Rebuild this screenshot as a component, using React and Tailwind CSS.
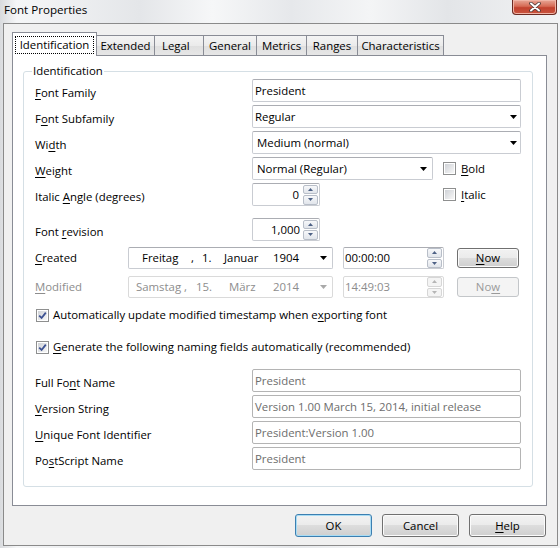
import React from "react";

const U = ({ children }) => (
  <span className="underline decoration-1 underline-offset-[2px]">{children}</span>
);

function DownArrow({ disabled }) {
  return (
    <svg width="7" height="4" viewBox="0 0 7 4" className="shrink-0">
      <polygon points="0,0 7,0 3.5,4" fill={disabled ? "#a9a9a9" : "#000"} />
    </svg>
  );
}

function SpinButtons({ disabled }) {
  const arrow = disabled ? "#b5b5b5" : "#4d6185";
  const half = disabled
    ? "flex-1 flex items-center justify-center border border-[#d6d6d6] rounded-[2px] bg-[#f4f4f4]"
    : "flex-1 flex items-center justify-center border border-[#b8bec8] rounded-[2px] bg-[linear-gradient(#f7f8fa,#e1e5eb)]";
  return (
    <div className="flex flex-col w-[15px] h-[20px] gap-[1px] shrink-0">
      <div className={half}>
        <svg width="5" height="3" viewBox="0 0 5 3">
          <polygon points="0,3 5,3 2.5,0" fill={arrow} />
        </svg>
      </div>
      <div className={half}>
        <svg width="5" height="3" viewBox="0 0 5 3">
          <polygon points="0,0 5,0 2.5,3" fill={arrow} />
        </svg>
      </div>
    </div>
  );
}

function CheckBox({ checked }) {
  return (
    <div className="w-[13px] h-[13px] border border-[#8e8f8f] bg-white p-[1px] shrink-0">
      <div className="w-full h-full bg-[linear-gradient(135deg,#cfd2d7,#f7f7f7)] flex items-center justify-center">
        {checked && (
          <svg width="9" height="9" viewBox="0 0 9 9">
            <path d="M1.2 4.6 L3.6 7 L7.8 1.6" fill="none" stroke="#3c5192" strokeWidth="1.8" />
          </svg>
        )}
      </div>
    </div>
  );
}

const fieldBox = "border border-[#c9ccd2] border-t-[#abadb3] rounded-[2px] bg-white";
const greyBox = "border border-[#b4b4b4] rounded-[2px] bg-white";
const btnNormal =
  "flex items-center justify-center rounded-[3px] border border-[#707070] bg-[linear-gradient(#f2f2f2_0%,#ebebeb_50%,#dddddd_50%,#cfcfcf_100%)] shadow-[inset_0_0_0_1px_#fbfbfb]";

function Label({ children, grey }) {
  return (
    <div className={`w-[217px] shrink-0 pt-[6px] leading-[16px] ${grey ? "text-[#8d8d8d]" : ""}`}>{children}</div>
  );
}

export default function App() {
  const tabs = [
    { t: "Extended", w: "w-[59px]", a: "justify-center" },
    { t: "Legal", w: "w-[50px]", a: "justify-start pl-[7px]" },
    { t: "General", w: "w-[54px]", a: "justify-center" },
    { t: "Metrics", w: "w-[51px]", a: "justify-center" },
    { t: "Ranges", w: "w-[52px]", a: "justify-center" },
    { t: "Characteristics", w: "w-[87px]", a: "justify-center" },
  ];

  return (
    <div className="w-[560px] h-[548px] overflow-hidden bg-[linear-gradient(90deg,#d9dbde,#f5f6f7_3%,#e4e6e9_25%,#f6f7f8_38%,#e6e8eb_52%,#f4f5f6_66%,#e3e5e8_80%,#f2f3f4)] font-['Open_Sans',sans-serif] text-[11.4px] text-black">
      {/* Title bar */}
      <div className="h-[23px] flex items-start justify-between">
        <div className="pl-[4px] pt-[2px] leading-[16px] text-[11.6px]">Font Properties</div>
        <div className="mr-[3px] w-[45px] h-[15px] rounded-b-[4px] border border-t-0 border-[#6b2a22] bg-[linear-gradient(#e8a696,#d66a55_45%,#c2412e_55%,#c9553f)] flex items-center justify-center shadow-[inset_0_0_0_1px_#f0b4a6]">
          <svg width="12" height="10" viewBox="0 0 12 10">
            <path d="M2 1.5 L10 8.5 M10 1.5 L2 8.5" stroke="#4a3a38" strokeWidth="3.6" strokeLinecap="round" />
            <path d="M2 1.5 L10 8.5 M10 1.5 L2 8.5" stroke="#ffffff" strokeWidth="2" strokeLinecap="round" />
          </svg>
        </div>
      </div>

      {/* Client area */}
      <div className="ml-[3px] w-[555px] h-[523px] border border-[#8a8a8a] bg-[#f0f0f0] flex flex-col">
        {/* Tabs */}
        <div className="pt-[8px] pl-[8px] flex items-end">
          <div className="relative z-10 w-[85px] h-[24px] -mb-px border border-b-0 border-[#898c95] bg-white px-[2px] pt-[3px]">
            <div className="h-[18px] border border-dotted border-black flex items-center justify-center leading-[16px]">
              Identification
            </div>
          </div>
          {tabs.map((tb) => (
            <div
              key={tb.t}
              className={`-ml-px h-[20px] ${tb.w} border border-b-0 border-[#898c95] bg-[linear-gradient(#f4f4f4,#ebebeb_50%,#dfdfdf_50%,#e6e6e6)] flex items-center ${tb.a} leading-[16px]`}
            >
              {tb.t}
            </div>
          ))}
        </div>

        {/* Tab panel */}
        <div className="ml-[8px] w-[535px] h-[451px] border border-[#898c95] bg-white pl-[10px] pt-[7px]">
          <fieldset className="w-[510px] border border-[#d5dfe5] rounded-[3px] p-0 m-0">
            <legend className="ml-[8px] px-[1px] leading-[16px]">Identification</legend>
            <div className="px-[11px] pb-[16px] flex flex-col">
              {/* Font Family */}
              <div className="flex h-[23px]">
                <Label>
                  <U>F</U>ont Family
                </Label>
                <div className={`flex-1 ${fieldBox} flex items-center px-[2px]`}>President</div>
              </div>
              {/* Font Subfamily */}
              <div className="flex h-[23px] mt-[3px]">
                <Label>
                  F<U>o</U>nt Subfamily
                </Label>
                <div className={`flex-1 ${fieldBox} flex items-center justify-between pl-[2px] pr-[3px]`}>
                  <span>Regular</span>
                  <DownArrow />
                </div>
              </div>
              {/* Width */}
              <div className="flex h-[23px] mt-[3px]">
                <Label>
                  Wi<U>d</U>th
                </Label>
                <div className={`flex-1 ${fieldBox} flex items-center justify-between pl-[4px] pr-[3px]`}>
                  <span>Medium (normal)</span>
                  <DownArrow />
                </div>
              </div>
              {/* Weight */}
              <div className="flex h-[23px] mt-[3px]">
                <Label>
                  <U>W</U>eight
                </Label>
                <div className={`w-[181px] ${fieldBox} flex items-center justify-between pl-[4px] pr-[5px]`}>
                  <span>Normal (Regular)</span>
                  <DownArrow />
                </div>
                <div className="ml-[10px] flex items-center gap-[5px]">
                  <CheckBox />
                  <span className="leading-[16px]">
                    <U>B</U>old
                  </span>
                </div>
              </div>
              {/* Italic Angle */}
              <div className="flex h-[23px] mt-[3px]">
                <Label>
                  Italic <U>A</U>ngle (degrees)
                </Label>
                <div className="w-[191px] flex">
                  <div className={`w-[68px] ${fieldBox} flex items-center justify-end pr-[1px] gap-[4px]`}>
                    <span>0</span>
                    <SpinButtons />
                  </div>
                </div>
                <div className="flex items-center gap-[5px]">
                  <CheckBox />
                  <span className="leading-[16px]">
                    <U>I</U>talic
                  </span>
                </div>
              </div>
              {/* Font revision */}
              <div className="flex h-[23px] mt-[12px]">
                <Label>
                  Font <U>r</U>evision
                </Label>
                <div className={`w-[68px] ${fieldBox} flex items-center justify-end pr-[1px] gap-[3px]`}>
                  <span>1,000</span>
                  <SpinButtons />
                </div>
              </div>
              {/* Created */}
              <div className="flex h-[22px] mt-[6px] items-center">
                <div className="w-[93px] shrink-0 leading-[16px]">
                  <U>C</U>reated
                </div>
                <div className={`w-[205px] h-[22px] ${fieldBox} flex items-center pl-[13px] pr-[5px]`}>
                  <span className="w-[49px]">Freitag</span>
                  <span className="w-[11px]">,</span>
                  <span className="w-[22px]">1.</span>
                  <span className="w-[49px]">Januar</span>
                  <span className="flex-1">1904</span>
                  <DownArrow />
                </div>
                <div className={`ml-[10px] w-[101px] h-[22px] ${fieldBox} flex items-center justify-between pl-[1px] pr-[1px]`}>
                  <span>00:00:00</span>
                  <SpinButtons />
                </div>
                <div className={`ml-[13px] w-[62px] h-[20px] ${btnNormal}`}>
                  <span>
                    <U>N</U>ow
                  </span>
                </div>
              </div>
              {/* Modified */}
              <div className="flex h-[22px] mt-[7px] items-center text-[#8d8d8d]">
                <div className="w-[93px] shrink-0 leading-[16px]">
                  <U>M</U>odified
                </div>
                <div className="w-[205px] h-[22px] border border-[#dadada] rounded-[2px] bg-white flex items-center pl-[7px] pr-[5px]">
                  <span className="w-[48px]">Samstag</span>
                  <span className="w-[12px]">,</span>
                  <span className="w-[33px]">15.</span>
                  <span className="w-[44px]">März</span>
                  <span className="flex-1">2014</span>
                  <DownArrow disabled />
                </div>
                <div className="ml-[10px] w-[101px] h-[22px] border border-[#dadada] rounded-[2px] bg-white flex items-center justify-between pl-[1px] pr-[1px]">
                  <span>14:49:03</span>
                  <SpinButtons disabled />
                </div>
                <div className="ml-[13px] w-[62px] h-[20px] rounded-[3px] border border-[#c3c6c9] bg-[#f4f4f4] flex items-center justify-center text-[#9a9a9a]">
                  <span>
                    No<U>w</U>
                  </span>
                </div>
              </div>
              {/* Checkbox 1 */}
              <div className="flex h-[16px] mt-[9px] items-center gap-[4px] pl-[1px]">
                <CheckBox checked />
                <span className="leading-[16px]">
                  Automatically update modified timestamp when e<U>x</U>porting font
                </span>
              </div>
              {/* Checkbox 2 */}
              <div className="flex h-[16px] mt-[16px] items-center gap-[4px] pl-[1px]">
                <CheckBox checked />
                <span className="leading-[16px]">
                  <U>G</U>enerate the following naming fields automatically (recommended)
                </span>
              </div>
              {/* Naming fields */}
              <div className="flex h-[23px] mt-[14px]">
                <Label>
                  Full Fo<U>n</U>t Name
                </Label>
                <div className={`flex-1 ${greyBox} flex items-center px-[2px] text-[#6d6d6d]`}>President</div>
              </div>
              <div className="flex h-[23px] mt-[3px]">
                <Label>
                  <U>V</U>ersion String
                </Label>
                <div className={`flex-1 ${greyBox} flex items-center px-[2px] text-[#6d6d6d]`}>
                  Version 1.00 March 15, 2014, initial release
                </div>
              </div>
              <div className="flex h-[23px] mt-[3px]">
                <Label>
                  <U>U</U>nique Font Identifier
                </Label>
                <div className={`flex-1 ${greyBox} flex items-center px-[2px] text-[#6d6d6d]`}>
                  President:Version 1.00
                </div>
              </div>
              <div className="flex h-[23px] mt-[3px]">
                <Label>
                  Po<U>s</U>tScript Name
                </Label>
                <div className={`flex-1 ${greyBox} flex items-center px-[2px] text-[#6d6d6d]`}>President</div>
              </div>
            </div>
          </fieldset>
        </div>

        {/* Dialog buttons */}
        <div className="mt-[8px] pr-[11px] flex justify-end gap-[10px]">
          <div className="w-[77px] h-[23px] flex items-center justify-center rounded-[3px] border border-[#3c7fb1] bg-[linear-gradient(#f2f2f2_0%,#ebebeb_50%,#dddddd_50%,#cfcfcf_100%)] shadow-[inset_0_0_0_1px_#a8dcf4]">
            OK
          </div>
          <div className={`w-[77px] h-[23px] ${btnNormal}`}>Cancel</div>
          <div className={`w-[77px] h-[23px] ${btnNormal}`}>
            <span>
              <U>H</U>elp
            </span>
          </div>
        </div>
      </div>
    </div>
  );
}
